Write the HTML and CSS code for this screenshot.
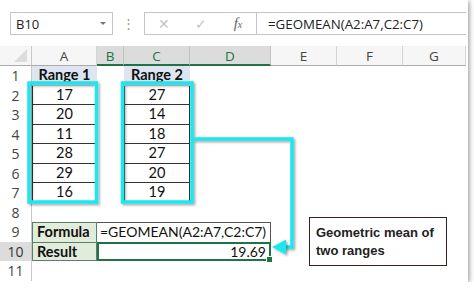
FILE: index.html
```html
<!DOCTYPE html>
<html lang="en">
<head>
    <meta charset="UTF-8">
    <title>GEOMEAN example</title>
    <link rel="stylesheet" href="styles.css">
</head>
<body>
    <div class="window">
        <div class="formula-bar">
            <div class="name-box">
                <span>B10</span>
                <span class="caret"></span>
            </div>
            <div class="dots">&#8942;</div>
            <div class="formula-box">
                <span class="fb-icon cancel">&#10005;</span>
                <span class="fb-icon enter">&#10003;</span>
                <span class="fb-icon fx">f<small>x</small></span>
                <span class="formula-text">=GEOMEAN(A2:A7,C2:C7)</span>
            </div>
        </div>

        <div class="grid">
            <div class="corner"><span class="tri"></span></div>
            <div class="col-head">A</div>
            <div class="col-head sel">B</div>
            <div class="col-head sel">C</div>
            <div class="col-head sel">D</div>
            <div class="col-head">E</div>
            <div class="col-head">F</div>
            <div class="col-head">G</div>

            <div class="row-head">1</div>
            <div class="cell title">Range 1</div>
            <div class="cell"></div>
            <div class="cell title">Range 2</div>
            <div class="cell span4"></div>

            <div class="row-head">2</div>
            <div class="cell val">17</div>
            <div class="cell"></div>
            <div class="cell val">27</div>
            <div class="cell span4"></div>

            <div class="row-head">3</div>
            <div class="cell val">20</div>
            <div class="cell"></div>
            <div class="cell val">14</div>
            <div class="cell span4"></div>

            <div class="row-head">4</div>
            <div class="cell val">11</div>
            <div class="cell"></div>
            <div class="cell val">18</div>
            <div class="cell span4"></div>

            <div class="row-head">5</div>
            <div class="cell val">28</div>
            <div class="cell"></div>
            <div class="cell val">27</div>
            <div class="cell span4"></div>

            <div class="row-head">6</div>
            <div class="cell val">29</div>
            <div class="cell"></div>
            <div class="cell val">20</div>
            <div class="cell span4"></div>

            <div class="row-head">7</div>
            <div class="cell val">16</div>
            <div class="cell"></div>
            <div class="cell val">19</div>
            <div class="cell span4"></div>

            <div class="row-head">8</div>
            <div class="cell span7"></div>

            <div class="row-head">9</div>
            <div class="cell label">Formula</div>
            <div class="cell merged">=GEOMEAN(A2:A7,C2:C7)</div>
            <div class="cell span3"></div>

            <div class="row-head sel">10</div>
            <div class="cell label last">Result</div>
            <div class="cell merged result">19.69<span class="handle"></span></div>
            <div class="cell span3"></div>

            <div class="row-head">11</div>
            <div class="cell span7"></div>
        </div>

        <svg class="marks" width="468" height="282" viewBox="0 0 468 282">
            <defs>
                <filter id="shade" x="-10%" y="-10%" width="130%" height="130%">
                    <feDropShadow dx="1.5" dy="1.5" stdDeviation="1" flood-color="#000" flood-opacity="0.35"/>
                </filter>
            </defs>
            <g fill="none" stroke="#1ee6ee" stroke-width="3.5" filter="url(#shade)">
                <rect x="29" y="83" width="67.5" height="119"/>
                <rect x="122.5" y="83" width="69.5" height="119"/>
                <polyline points="193,139 292,139 292,247 284,247"/>
            </g>
            <polygon points="272,247 286,239.5 286,254.5" fill="#1ee6ee" filter="url(#shade)"/>
        </svg>

        <div class="note">Geometric mean of two ranges</div>
    </div>
</body>
</html>
```

FILE: styles.css
```css
:root {
    --excel-green: #217346;
    --cyan: #1ee6ee;
    --head-bg: #f6f6f6;
    --head-sel: #dcdcdc;
    --line: #d4d4d4;
}
body {
    margin: 0;
    background: #fff;
    font-family: "Open Sans", sans-serif;
}
.window {
    position: relative;
    width: 468px;
    height: 282px;
    background: #fff;
    box-shadow: 1px 1px 5px rgba(0, 0, 0, 0.45);
    overflow: hidden;
}

/* formula bar */
.formula-bar {
    height: 46px;
    box-sizing: border-box;
    padding: 12px 0 0 10px;
    display: flex;
    align-items: flex-start;
}
.name-box {
    width: 103px;
    height: 23px;
    box-sizing: border-box;
    border: 1px solid #c6c6c6;
    display: flex;
    align-items: center;
    justify-content: space-between;
    padding: 0 6px 0 5px;
    font-size: 13px;
    color: #222;
}
.caret {
    width: 0;
    height: 0;
    border-left: 3px solid transparent;
    border-right: 3px solid transparent;
    border-top: 3px solid #777;
}
.dots {
    width: 31px;
    text-align: center;
    line-height: 23px;
    color: #9a9a9a;
    font-size: 13px;
}
.formula-box {
    width: 322px;
    height: 23px;
    box-sizing: border-box;
    border: 1px solid #c6c6c6;
    border-right: none;
    display: flex;
    align-items: center;
}
.fb-icon {
    color: #c4c4c4;
    font-size: 14px;
    text-align: center;
}
.cancel {
    width: 36px;
    margin-left: 1px;
}
.enter {
    width: 38px;
}
.fx {
    width: 36px;
    color: #666;
    font-family: "Liberation Serif", serif;
    font-style: italic;
    font-size: 15px;
    border-right: 1px solid #c6c6c6;
    height: 21px;
    line-height: 20px;
}
.fx small {
    font-size: 10px;
}
.formula-text {
    padding-left: 11px;
    font-size: 13.3px;
    color: #222;
}

/* sheet grid */
.grid {
    display: grid;
    grid-template-columns: 32px 65px 27px 66px 81px 66px 66px 63px;
    grid-template-rows: 20px repeat(11, 19.5px);
}
.corner {
    background: var(--head-bg);
    border-right: 1px solid #c8c8c8;
    border-bottom: 1px solid #ababab;
    position: relative;
}
.tri {
    position: absolute;
    right: 4px;
    bottom: 3px;
    width: 0;
    height: 0;
    border-left: 13px solid transparent;
    border-bottom: 13px solid #dcdcdc;
}
.col-head {
    background: var(--head-bg);
    border-right: 1px solid var(--line);
    border-bottom: 1px solid #ababab;
    text-align: center;
    font-size: 13.5px;
    line-height: 20px;
    color: #444;
}
.col-head.sel {
    background: var(--head-sel);
    color: var(--excel-green);
    border-bottom: 2px solid var(--excel-green);
    border-right-color: #c2c2c2;
}
.row-head {
    border-right: 1px solid #c8c8c8;
    text-align: center;
    font-size: 14px;
    line-height: 19.5px;
    color: #444;
}
.row-head.sel {
    background: var(--head-sel);
    color: #333;
}
.cell {
    box-sizing: border-box;
    font-family: "Lato", sans-serif;
    font-size: 14.5px;
    line-height: 18px;
    color: #111;
}
.span3 {
    grid-column: span 3;
}
.span4 {
    grid-column: span 4;
}
.span7 {
    grid-column: span 7;
}
.title {
    background: #dde5f0;
    font-weight: bold;
    text-align: center;
}
.val {
    border-left: 1px solid #333;
    border-right: 1px solid #333;
    border-bottom: 1px solid #333;
    text-align: center;
}
.label {
    background: #e2ecda;
    border: 1px solid #58806a;
    border-bottom: none;
    font-weight: bold;
    padding-left: 4px;
}
.label.last {
    border-bottom: 1px solid #58806a;
}
.merged {
    grid-column: span 3;
    border: 1px solid #555;
    border-left: none;
    border-bottom: none;
    padding-left: 3px;
    white-space: nowrap;
    font-size: 14px;
}
.result {
    position: relative;
    border: 2px solid var(--excel-green);
    text-align: right;
    padding: 0 3px 0 0;
    line-height: 16px;
}
.handle {
    position: absolute;
    right: -4px;
    bottom: -4px;
    width: 5px;
    height: 5px;
    background: var(--excel-green);
    border: 1px solid #fff;
}

/* annotations drawn over the sheet */
.marks {
    position: absolute;
    left: 0;
    top: 0;
    pointer-events: none;
}
.note {
    position: absolute;
    left: 309px;
    top: 217px;
    width: 138px;
    height: 49px;
    box-sizing: border-box;
    border: 1.5px solid #3b1f1f;
    padding: 6px 6px;
    font-family: "Liberation Sans", Arial, sans-serif;
    font-weight: bold;
    font-size: 13px;
    line-height: 18px;
    color: #222;
}
```
